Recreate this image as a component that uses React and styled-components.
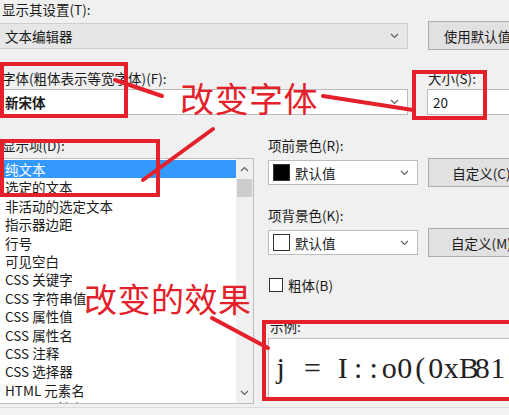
import React from "react";
import styled, { createGlobalStyle } from "styled-components";

const GlobalStyle = createGlobalStyle`
  html, body {
    margin: 0;
    padding: 0;
    background: #f0f0f0;
  }
  body {
    font-family: "Noto Sans CJK SC", "Noto Sans", sans-serif;
    color: #1a1a1a;
  }
`;

const RED = "#e4202a";

const Page = styled.div`
  position: relative;
  width: 509px;
  height: 415px;
  overflow: hidden;
  background: #f0f0f0;
`;

const Dialog = styled.div`
  display: flex;
  flex-direction: column;
  width: 560px;
  margin-left: -2px;
  font-size: 13.5px;
`;

const Label = styled.div`
  height: 18px;
  line-height: 18px;
  padding-left: ${(p) => p.$pl ?? 4}px;
  margin-top: ${(p) => p.$mt || 0}px;
  white-space: nowrap;
  color: #1a1a1a;
`;

const Row = styled.div`
  display: flex;
  align-items: ${(p) => p.$align || "center"};
  gap: ${(p) => p.$gap ?? 20}px;
  margin-top: ${(p) => p.$mt || 0}px;
  height: ${(p) => (p.$h ? p.$h + "px" : "auto")};
`;

const Column = styled.div`
  display: flex;
  flex-direction: column;
  width: ${(p) => (p.$w ? p.$w + "px" : "auto")};
  flex-shrink: 0;
  margin-left: ${(p) => p.$ml || 0}px;
`;

const Combo = styled.div`
  display: flex;
  align-items: center;
  gap: 5px;
  box-sizing: border-box;
  width: ${(p) => p.$w}px;
  height: ${(p) => p.$h || 26}px;
  margin-top: ${(p) => p.$mt || 0}px;
  padding: 0 8px 0 ${(p) => p.$pl ?? 6}px;
  flex-shrink: 0;
  background: ${(p) => (p.$readonly ? "#e6e6e6" : "#ffffff")};
  border: 1px solid ${(p) => (p.$readonly ? "#cfcfcf" : "#bcbcbc")};
  font-weight: ${(p) => (p.$bold ? 700 : 400)};
  white-space: nowrap;
`;

const ComboText = styled.span`
  flex: 1;
  overflow: hidden;
`;

const Button = styled.div`
  box-sizing: border-box;
  width: 118px;
  height: 29px;
  flex-shrink: 0;
  display: flex;
  align-items: center;
  justify-content: center;
  background: #e1e1e1;
  border: 1px solid #adadad;
  white-space: nowrap;
`;

const Swatch = styled.span`
  width: 17px;
  height: 17px;
  box-sizing: border-box;
  background: ${(p) => p.$color};
  border: 1px solid #333;
  flex-shrink: 0;
`;

const ListBox = styled.div`
  display: flex;
  box-sizing: border-box;
  width: 256px;
  height: 246px;
  margin-top: 4px;
  background: #ffffff;
  border: 1px solid #bdbdbd;
  overflow: hidden;
`;

const Items = styled.div`
  flex: 1;
  padding-top: 1px;
  overflow: hidden;
`;

const Item = styled.div`
  height: 18.4px;
  line-height: 18.4px;
  padding-left: 6px;
  white-space: nowrap;
  background: ${(p) => (p.$selected ? "#3399ff" : "transparent")};
  color: ${(p) => (p.$selected ? "#ffffff" : "#1a1a1a")};
`;

const ScrollBar = styled.div`
  width: 17px;
  display: flex;
  flex-direction: column;
  background: #f0f0f0;
`;

const ScrollBtn = styled.div`
  height: 20px;
  display: flex;
  align-items: center;
  justify-content: center;
`;

const Thumb = styled.div`
  height: 18px;
  margin: 0 1px;
  background: #cdcdcd;
`;

const Track = styled.div`
  flex: 1;
`;

const CheckRow = styled.div`
  display: flex;
  align-items: center;
  gap: 5px;
  height: 18px;
  margin-top: 19px;
  padding-left: 1px;
`;

const CheckBox = styled.span`
  width: 14px;
  height: 14px;
  box-sizing: border-box;
  border: 1px solid #333;
  background: #fff;
`;

const Sample = styled.div`
  box-sizing: border-box;
  width: 300px;
  height: 60px;
  margin-top: 3px;
  padding-left: 4px;
  display: flex;
  align-items: center;
  background: #ffffff;
  border: 1px solid #bcbcbc;
  font-family: "Liberation Serif", "DejaVu Serif", serif;
  font-size: 30px;
  color: #222;
  white-space: nowrap;
  overflow: hidden;
`;

const Cell = styled.span`
  display: inline-block;
  flex-shrink: 0;
  width: 15.5px;
  text-align: center;
`;

const Footer = styled.div`
  margin-top: 3px;
  height: 20px;
  border-top: 1px solid #dcdcdc;
  background: #f3f3f3;
`;

/* annotations drawn over the dialog */
const Overlay = styled.div`
  position: absolute;
  inset: 0;
  pointer-events: none;
`;

const AnnoBox = styled.div`
  position: absolute;
  box-sizing: border-box;
  left: ${(p) => p.$x}px;
  top: ${(p) => p.$y}px;
  width: ${(p) => p.$w}px;
  height: ${(p) => p.$h}px;
  border: 4px solid ${RED};
`;

const AnnoText = styled.div`
  position: absolute;
  left: ${(p) => p.$x}px;
  top: ${(p) => p.$y}px;
  font-size: ${(p) => p.$size}px;
  line-height: ${(p) => p.$size}px;
  letter-spacing: 0.5px;
  color: ${RED};
  white-space: nowrap;
`;

const Lines = styled.svg`
  position: absolute;
  left: 0;
  top: 0;
`;

const Chevron = ({ up }) => (
  <svg width="9" height="6" viewBox="0 0 9 6">
    <path
      d={up ? "M1 5 L4.5 1.5 L8 5" : "M1 1 L4.5 4.5 L8 1"}
      fill="none"
      stroke="#5f5f5f"
      strokeWidth="1.2"
    />
  </svg>
);

const items = [
  "纯文本",
  "选定的文本",
  "非活动的选定文本",
  "指示器边距",
  "行号",
  "可见空白",
  "CSS 关键字",
  "CSS 字符串值",
  "CSS 属性值",
  "CSS 属性名",
  "CSS 注释",
  "CSS 选择器",
  "HTML 元素名",
  "HTML 属性名",
];

const sample = "j = I::o0(0xB81)";

const App = () => {
  return (
    <Page>
      <GlobalStyle />
      <Dialog>
        <Label>显示其设置(T):</Label>
        <Row $mt={3} $h={29}>
          <Combo $w={410} $readonly>
            <ComboText>文本编辑器</ComboText>
            <Chevron />
          </Combo>
          <Button>使用默认值(U)</Button>
        </Row>

        <Row $mt={19} $align="flex-start" $gap={19}>
          <Column $w={410}>
            <Label>字体(粗体表示等宽字体)(F):</Label>
            <Combo $w={410} $mt={2} $bold>
              <ComboText>新宋体</ComboText>
              <Chevron />
            </Combo>
          </Column>
          <Column>
            <Label $pl={1}>大小(S):</Label>
            <Combo $w={118} $mt={2} $pl={5}>
              <ComboText>20</ComboText>
            </Combo>
          </Column>
        </Row>

        <Row $mt={21} $align="flex-start" $gap={0}>
          <Column $w={256}>
            <Label>显示项(D):</Label>
            <ListBox>
              <Items>
                {items.map((t, i) => (
                  <Item key={t} $selected={i === 0}>
                    {t}
                  </Item>
                ))}
              </Items>
              <ScrollBar>
                <ScrollBtn>
                  <Chevron up />
                </ScrollBtn>
                <Thumb />
                <Track />
                <ScrollBtn>
                  <Chevron />
                </ScrollBtn>
              </ScrollBar>
            </ListBox>
          </Column>

          <Column $ml={14}>
            <Label $pl={0}>项前景色(R):</Label>
            <Row $mt={4} $h={29} $gap={10}>
              <Combo $w={150} $h={25} $pl={4}>
                <Swatch $color="#000000" />
                <ComboText>默认值</ComboText>
                <Chevron />
              </Combo>
              <Button>自定义(C)...</Button>
            </Row>
            <Label $pl={0} $mt={19}>
              项背景色(K):
            </Label>
            <Row $mt={4} $h={29} $gap={10}>
              <Combo $w={150} $h={25} $pl={4}>
                <Swatch $color="#ffffff" />
                <ComboText>默认值</ComboText>
                <Chevron />
              </Combo>
              <Button>自定义(M)...</Button>
            </Row>
            <CheckRow>
              <CheckBox />
              <span>粗体(B)</span>
            </CheckRow>
            <Label $pl={2} $mt={23}>
              示例:
            </Label>
            <Sample>
              {sample.split("").map((c, i) => (
                <Cell key={i}>{c === " " ? "\u00a0" : c}</Cell>
              ))}
            </Sample>
          </Column>
        </Row>
        <Footer />
      </Dialog>

      <Overlay>
        <AnnoBox $x={0} $y={62} $w={128} $h={56} />
        <AnnoBox $x={412} $y={70} $w={75} $h={50} />
        <AnnoBox $x={0} $y={139} $w={160} $h={58} />
        <AnnoBox $x={262} $y={320} $w={260} $h={81} />
        <Lines width="509" height="415" viewBox="0 0 509 415">
          <g stroke={RED} strokeWidth="4" strokeLinecap="round">
            <line x1="115" y1="80" x2="162" y2="96" />
            <line x1="323" y1="96" x2="413" y2="110" />
            <line x1="213" y1="129" x2="143" y2="180" />
            <line x1="212" y1="318" x2="268" y2="348" />
          </g>
        </Lines>
        <AnnoText $x={180} $y={81} $size={34}>
          改变字体
        </AnnoText>
        <AnnoText $x={84} $y={282} $size={33}>
          改变的效果
        </AnnoText>
      </Overlay>
    </Page>
  );
};

export default App;
